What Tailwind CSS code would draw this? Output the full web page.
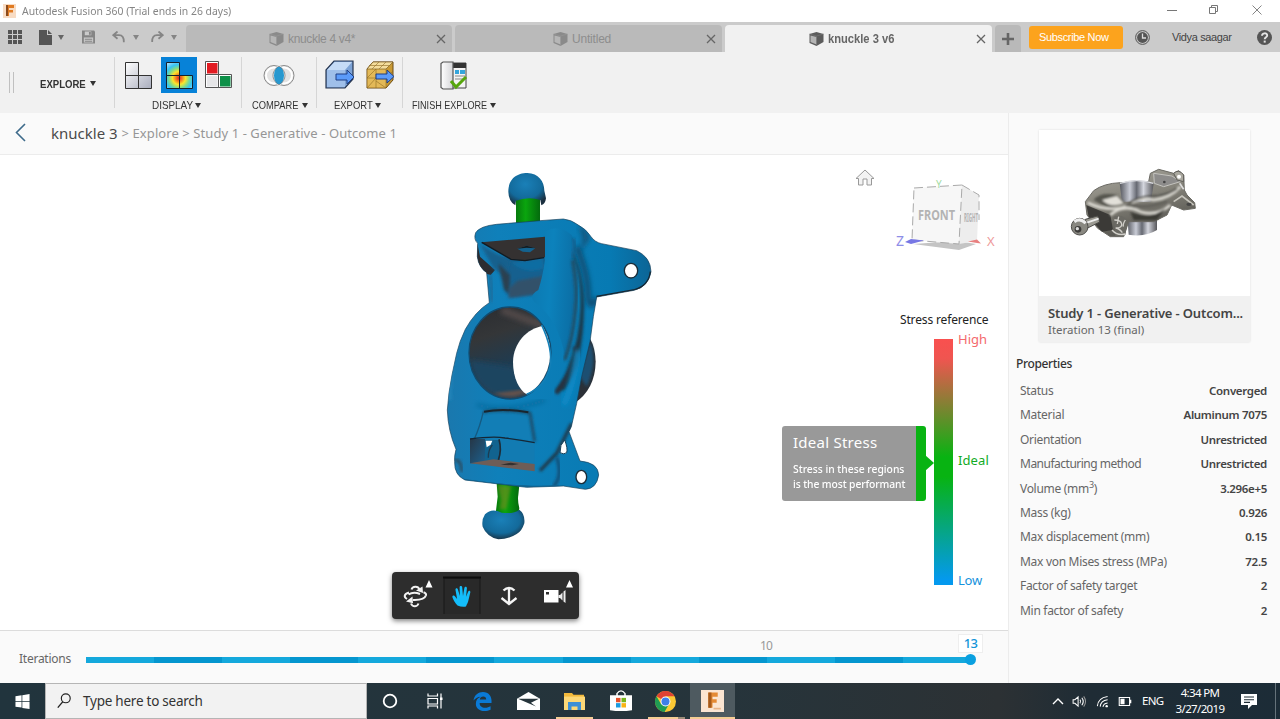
<!DOCTYPE html>
<html lang="en">
<head>
<meta charset="utf-8">
<title>Autodesk Fusion 360</title>
<script src="https://cdn.jsdelivr.net/npm/@tailwindcss/browser@4"></script>
</head>
<body class="w-[1280px] h-[719px] overflow-hidden flex flex-col bg-white font-['Noto_Sans','Open_Sans',sans-serif] whitespace-nowrap">
<svg class="hidden">
  <defs>
    <symbol id="cube" viewBox="0 0 16 16"><path d="M1 3 8 1l7 2v8l-7 4-7-3z" fill="#5c5c5c"/><path d="M2 4.500l6 1.500v7.500l-6-2.500z" fill="#b4b4b4"/><path d="M1 3 8 5l7-2M8 5v10" stroke="#777" stroke-width=".6" fill="none"/></symbol>
    <symbol id="x" viewBox="0 0 10 10"><path d="M1 1l8 8M9 1l-8 8" stroke="#666" stroke-width="1.300"/></symbol>
    <symbol id="tri" viewBox="0 0 6 5"><path d="M0 0h6L3 5z" fill="currentColor"/></symbol>
  </defs>
</svg>

<!-- Title bar -->
<header class="h-[22px] shrink-0 flex items-center bg-white pl-[3px] pr-[18px]">
  <svg class="w-[13px] h-[14px]" viewBox="0 0 13 14"><rect width="13" height="14" fill="#f8dcc4"/><path d="M3 1h8v3H6v2h4v2.500H6V12H3z" fill="#e07b22"/><path d="M3 1h2v11H3z" fill="#8a4a1c"/></svg>
  <span class="ml-[6px] text-[11.5px] origin-left scale-x-[0.905] text-[#858585]">Autodesk Fusion 360 (Trial ends in 26 days)</span>
  <div class="ml-auto -mt-[3px] flex items-center">
    <svg class="w-[10px] h-[10px]" viewBox="0 0 10 10"><path d="M0 5.500h10" stroke="#777"/></svg>
    <svg class="ml-[31px] w-[11px] h-[11px]" viewBox="0 0 11 11" fill="none" stroke="#777"><path d="M1.500 3.500h6v6h-6zM3.500 3V1.500h6v6H8"/></svg>
    <svg class="ml-[33px] w-[10px] h-[10px]" viewBox="0 0 10 10"><path d="M.5.5l9 9M9.500.5l-9 9" stroke="#777" stroke-width=".9"/></svg>
  </div>
</header>

<!-- Tab strip -->
<nav class="h-[30px] shrink-0 flex items-end bg-[#cbcbcb] font-['Liberation_Sans',sans-serif] text-[12px]">
  <div class="w-[186px] h-[30px] flex items-center pl-[8px] text-[#666]">
    <svg class="w-[14px] h-[14px]" viewBox="0 0 14 14" fill="#555"><path d="M0 0h4v4H0zM5 0h4v4H5zM10 0h4v4h-4zM0 5h4v4H0zM5 5h4v4H5zM10 5h4v4h-4zM0 10h4v4H0zM5 10h4v4H5zM10 10h4v4h-4z"/></svg>
    <svg class="ml-[17px] w-[13px] h-[15px]" viewBox="0 0 13 15" fill="#555"><path d="M0 0h8v5h5v10H0z"/><path d="M9 0l4 4H9z"/></svg>
    <svg class="ml-[6px] w-[6px] h-[5px]"><use href="#tri"/></svg>
    <svg class="ml-[18px] w-[13px] h-[14px]" viewBox="0 0 14 14"><path d="M0 0h13l1 1v13H0z" fill="#858585"/><path d="M3 1h7v4H3zM2 7.500h10V13H2z" fill="#cbcbcb"/><path d="M7.500 1.500h2v3h-2zM3 9h8v1H3zM3 11h8v1H3z" fill="#858585"/></svg>
    <svg class="ml-[17px] w-[13px] h-[12px]" viewBox="0 0 13 12" fill="none" stroke="#858585" stroke-width="1.800"><path d="M5.500.5 1.200 4.200l4.300 3.600M1.500 4.200H7c3.500 0 5 2.500 4.800 7"/></svg>
    <svg class="ml-[8px] w-[6px] h-[5px] text-[#858585]"><use href="#tri"/></svg>
    <svg class="ml-[12px] w-[13px] h-[12px]" viewBox="0 0 13 12" fill="none" stroke="#858585" stroke-width="1.800"><path d="M7.500.5l4.300 3.700-4.300 3.600M11.500 4.200H6C2.500 4.200 1 6.700 1.200 11"/></svg>
    <svg class="ml-[7px] w-[6px] h-[5px] text-[#858585]"><use href="#tri"/></svg>
  </div>
  <div class="w-[266px] h-[27px] rounded-t bg-[#bababa] flex items-center text-[#8d8d8d] pr-[6px]">
    <svg class="ml-[82px] w-[17px] h-[16px] opacity-50"><use href="#cube"/></svg>
    <span class="ml-[3px] tracking-[-0.33px]">knuckle 4 v4*</span>
    <svg class="ml-auto w-[10px] h-[10px]"><use href="#x"/></svg>
  </div>
  <div class="ml-[3px] w-[267px] h-[27px] rounded-t bg-[#bababa] flex items-center text-[#8d8d8d] pr-[6px]">
    <svg class="ml-[97px] w-[17px] h-[16px] opacity-50"><use href="#cube"/></svg>
    <span class="ml-[3px] tracking-[-0.2px]">Untitled</span>
    <svg class="ml-auto w-[10px] h-[10px]"><use href="#x"/></svg>
  </div>
  <div class="ml-[3px] w-[267px] h-[27px] rounded-t bg-[#f1f1f1] flex items-center text-[#666] font-bold pr-[6px]">
    <svg class="ml-[83px] w-[17px] h-[16px]"><use href="#cube"/></svg>
    <span class="ml-[3px] origin-left scale-x-[0.93]">knuckle 3 v6</span>
    <svg class="ml-auto w-[10px] h-[10px]"><use href="#x"/></svg>
  </div>
  <div class="ml-[3px] w-[26px] h-[27px] rounded-t bg-[#b9b9b9] flex items-center justify-center">
    <svg class="w-[12px] h-[12px]" viewBox="0 0 12 12"><path d="M6 0v12M0 6h12" stroke="#666" stroke-width="2.600"/></svg>
  </div>
  <div class="flex-1 h-[30px] flex items-center pl-[8px] pr-[8px]">
    <div class="w-[94px] h-[23px] rounded-[3px] bg-[#fca31d] text-white text-[11px] flex items-center pl-[10px] tracking-[-0.34px]">Subscribe Now</div>
    <svg class="ml-[12px] w-[15px] h-[15px]" viewBox="0 0 15 15"><circle cx="7.500" cy="7.500" r="6.900" fill="none" stroke="#555"/><circle cx="7.500" cy="7.500" r="5.400" fill="#555"/><path d="M7.500 3.500v4.500h3.500" stroke="#ddd" stroke-width="1.300" fill="none"/></svg>
    <span class="ml-[22px] text-[11px] text-[#444] tracking-[-0.37px]">Vidya saagar</span>
    <svg class="ml-auto w-[15px] h-[15px]" viewBox="0 0 15 15"><circle cx="7.500" cy="7.500" r="7.500" fill="#555"/><path d="M5 5.800c0-3.300 5.200-3.200 5.200-.3 0 1.900-2.500 1.700-2.500 3.800" stroke="#e4e4e4" stroke-width="1.900" fill="none"/><path d="M6.700 10.600h2v2h-2z" fill="#e4e4e4"/></svg>
  </div>
</nav>

<!-- Ribbon -->
<section class="h-[61px] shrink-0 flex bg-[#f1f1f1] font-['Liberation_Sans',sans-serif] text-[11px] text-[#333]">
  <div class="w-[114px] flex items-center pl-[9px]">
    <div class="w-[5px] h-[21px] border-x border-[#c0c0c0]"></div>
    <span class="ml-[26px] mt-[4px] w-[46px] font-bold text-[11px] origin-left scale-x-[0.87]">EXPLORE</span>
    <svg class="ml-[4px] mt-[2px] w-[6px] h-[5px]"><use href="#tri"/></svg>
  </div>
  <div class="w-[128px] my-[5px] border-x border-[#d6d6d6] flex flex-col">
    <div class="h-[36px] shrink-0 flex items-start pl-[10px]">
      <svg class="mt-[5px] w-[27px] h-[27px]" viewBox="0 0 27 27"><defs><linearGradient id="gr" x2="1" y2="1"><stop stop-color="#fff"/><stop offset="1" stop-color="#a9adbd"/></linearGradient></defs><g fill="url(#gr)" stroke="#333"><path d="M.5.5h13v13H.5zM.5 13.500h13v13H.5zM13.500 13.500h13v13h-13z"/></g></svg>
      <div class="ml-[9px] w-[36px] h-[36px] bg-[#0782d8] flex items-center justify-center">
        <svg class="w-[27px] h-[27px]" viewBox="0 0 27 27"><defs><radialGradient id="ht" gradientUnits="userSpaceOnUse" cx="13" cy="16" r="18"><stop stop-color="#d8202c"/><stop offset=".17" stop-color="#f47a20"/><stop offset=".36" stop-color="#fbe52b"/><stop offset=".56" stop-color="#7edb8b"/><stop offset=".75" stop-color="#36c5f4"/><stop offset="1" stop-color="#9bdcff"/></radialGradient></defs><g fill="url(#ht)" stroke="#17202a"><path d="M.5.5h13v13H.5zM.5 13.500h13v13H.5zM13.500 13.500h13v13h-13z"/></g></svg>
      </div>
      <svg class="ml-[8px] mt-[4px] w-[27px] h-[27px]" viewBox="0 0 27 27"><path d="M.5.5h13v13H.5zM.5 13.500h13v13H.5zM13.500 13.500h13v13h-13z" fill="#fff" stroke="#555"/><path d="M2 2h10.500v10.500H2z" fill="#e21b22"/><path d="M15 15h10.500v10.500H15z" fill="#0d9048"/><path d="M2 15h10.500v10.500H2z" fill="#e6e6e8"/></svg>
    </div>
    <div class="flex items-center pl-[37px] pt-[5px]"><span class="w-[41px] leading-[14px] origin-left scale-x-[0.9]">DISPLAY</span><svg class="ml-[2px] w-[6px] h-[5px]"><use href="#tri"/></svg></div>
  </div>
  <div class="w-[74px] my-[5px] flex flex-col">
    <div class="h-[36px] shrink-0 flex pl-[21px]">
      <svg class="mt-[7px] w-[32px] h-[24px]" viewBox="0 0 32 24"><rect x="1" y="1.500" width="20" height="20" rx="10" fill="#e3e3e3" stroke="#8a8a8a"/><rect x="11" y="1.500" width="20" height="20" rx="10" fill="#e3e3e3" stroke="#8a8a8a"/><rect x="3" y="3.500" width="16" height="16" rx="8" fill="none" stroke="#fff" stroke-width="2"/><rect x="13" y="3.500" width="16" height="16" rx="8" fill="none" stroke="#fff" stroke-width="2"/><ellipse cx="16" cy="11.500" rx="5.500" ry="9.500" fill="#2798cf" stroke="#fff" stroke-width="1"/><path d="M16 2c-8 5-8 14 0 19 8-5 8-14 0-19z" fill="none" stroke="#777" stroke-width=".8"/></svg>
    </div>
    <div class="flex items-center pl-[10px] pt-[5px]"><span class="w-[46px] leading-[14px] origin-left scale-x-[0.85]">COMPARE</span><svg class="ml-[4px] w-[6px] h-[5px]"><use href="#tri"/></svg></div>
  </div>
  <div class="w-[87px] my-[5px] border-x border-[#d6d6d6] flex flex-col">
    <div class="h-[36px] shrink-0 flex pl-[8px]">
      <svg class="mt-[3px] w-[30px] h-[29px]" viewBox="0 0 30 29"><path d="M1 10 9 1h19v18l-8 9H1z" fill="#7da3d6" stroke="#26354f" stroke-width="1.200"/><path d="M2 10 9.500 2H27l-7 8z" fill="#c5dbf6"/><path d="M2 10h18v17H2z" fill="#9fbfe9"/><path d="M11 14h11V10l7 7-7 7v-4H11z" fill="#5b9bfa" stroke="#1f3f85"/></svg>
      <svg class="ml-[11px] mt-[4px] w-[29px] h-[28px]" viewBox="0 0 29 28"><path d="M1 8 7 1h20v18l-7 8H1z" fill="#c99a34" stroke="#6d4d14" stroke-width="1"/><path d="M1.500 8H20v18.500H1.500z" fill="#e3b958"/><path d="M1 8 7 1h20l-7 7z" fill="#f4dd9c" stroke="#6d4d14" stroke-width=".6"/><path d="M1 17h9M10 8v19M10 17 1 27M10 20l10 7M20 8v19M6 8l7-7M13 8l7-7M20 17l7-7M3 4.500h20M1 17l9-9" stroke="#8f6b24" stroke-width=".6" fill="none"/><path d="M10 13h11V9l7 6.500-7 6.500v-4H10z" fill="#5b9bfa" stroke="#1f3f85"/></svg>
    </div>
    <div class="flex items-center pl-[17px] pt-[5px]"><span class="w-[38px] leading-[14px] origin-left scale-x-[0.86]">EXPORT</span><svg class="ml-[3px] w-[6px] h-[5px]"><use href="#tri"/></svg></div>
  </div>
  <div class="my-[5px] flex flex-col">
    <div class="h-[36px] shrink-0 flex pl-[37px]">
      <svg class="mt-[4px] w-[28px] h-[29px]" viewBox="0 0 28 29"><defs><linearGradient id="dr"><stop stop-color="#fff"/><stop offset="1" stop-color="#d5d5d8"/></linearGradient></defs><path d="M12 2h14v25H12z" fill="#f4f4f4" stroke="#444"/><path d="M13 2h13v5H13z" fill="#333"/><path d="M15 9h4v4h-4zM20 9h5v4h-5z" fill="#34a5dc"/><path d="M15 15h10M15 18h9" stroke="#888"/><path d="M1 2.500 3 1h10v27H3l-2-1.500z" fill="url(#dr)" stroke="#555" stroke-width="1.200"/><path d="M11 20l5 6 10-10" stroke="#57a60d" stroke-width="3" fill="none"/></svg>
    </div>
    <div class="flex items-center pl-[9px] pt-[5px]"><span class="w-[75px] leading-[14px] origin-left scale-x-[0.825]">FINISH EXPLORE</span><svg class="ml-[3px] w-[6px] h-[5px]"><use href="#tri"/></svg></div>
  </div>
</section>

<main class="h-[570px] shrink-0 flex">
  <div class="w-[1008px] flex flex-col">
    <!-- Breadcrumb -->
    <div class="h-[42px] shrink-0 bg-[#fafafa] border-b border-[#ececec] flex items-center pl-[15px] text-[#969696] text-[13px]">
      <svg class="w-[11px] h-[19px] -mt-[2px]" viewBox="0 0 11 19"><path d="M10 1 1.500 9.500 10 18" fill="none" stroke="#3d6a8a" stroke-width="1.600"/></svg>
      <span class="ml-[25px] text-[15px] text-[#4a4a4a]">knuckle 3</span>
      <span class="ml-[4px] tracking-[0.08px]">&gt; Explore &gt; Study 1 - Generative - Outcome 1</span>
    </div>

    <!-- 3D viewport -->
    <div class="relative h-[475px] shrink-0 bg-white overflow-hidden">
      <svg class="absolute left-[430px] top-[5px] w-[240px] h-[390px]" viewBox="0 0 720 1170">
        <defs>
          <linearGradient id="bl" x2="1"><stop stop-color="#1a78ae"/><stop offset=".25" stop-color="#0f80ba"/><stop offset=".8" stop-color="#077ab3"/><stop offset="1" stop-color="#0c6596"/></linearGradient>
          <radialGradient id="ball" cx=".45" cy=".35" r=".68"><stop stop-color="#1a80b8"/><stop offset=".65" stop-color="#136a9b"/><stop offset="1" stop-color="#1b2f3f"/></radialGradient>
          <linearGradient id="bore" x2="0.300" y2="1"><stop stop-color="#2a2c30"/><stop offset=".35" stop-color="#343638"/><stop offset=".7" stop-color="#1f3b50"/><stop offset="1" stop-color="#3f3b3c"/></linearGradient>
          <linearGradient id="gn" x2="1"><stop stop-color="#067a0c"/><stop offset=".4" stop-color="#0aa50e"/><stop offset="1" stop-color="#046a0d"/></linearGradient>
          <linearGradient id="dk" x2="1" y2="1"><stop stop-color="#263747"/><stop offset="1" stop-color="#1c5f8c"/></linearGradient>
          <linearGradient id="lobe" x2="1" y2=".2"><stop stop-color="#0c78b0"/><stop offset=".5" stop-color="#0c82bc"/><stop offset="1" stop-color="#0b70a7"/></linearGradient>
          <clipPath id="bc"><ellipse cx="240" cy="579" rx="121" ry="136"/></clipPath>
          <filter id="s3"><feGaussianBlur stdDeviation="4"/></filter>
          <filter id="s8"><feGaussianBlur stdDeviation="8"/></filter>
          <path id="sil" d="M137 218Q150 198 200 193L330 182 400 177Q425 180 440 192 470 208 483 230 495 247 515 251L620 272Q662 292 663 335 656 380 612 391L500 411 490 470 480 545 455 650 440 730 424 800 417 815 450 903Q505 908 506 945 500 986 466 988L400 978 290 982 105 960Q72 945 74 905 72 890 78 868 54 812 52 750 55 700 66 645L80 580Q88 545 106 508 135 455 178 428L170 338Q146 322 142 290L143 250Q130 238 137 218Z"/>
          <clipPath id="sc"><use href="#sil"/></clipPath>
        </defs>
        <path d="M440 510Q494 520 497 605 495 690 432 730z" fill="#2b3037"/>
        <path d="M480 545Q492 570 490 610 485 650 470 680L450 650z" fill="#1f4f72" filter="url(#s3)"/>
        <path d="M258 110h72v80h-72z" fill="url(#gn)"/>
        <path d="M235 95C235 55 262 39 292 39 325 39 343 65 343 92L348 115Q346 132 334 136L331 120Q295 108 258 122L256 136Q236 125 235 95z" fill="url(#ball)"/>
        <path d="M200 970L268 975 265 1005Q262 1020 268 1045L265 1060H197L203 1010z" fill="url(#gn)"/><path d="M203 975l40 3-14 70-20 0 4-28z" fill="#a08126" opacity=".45" filter="url(#s3)"/>
        <path d="M165 1063Q185 1043 215 1058 250 1063 268 1049 286 1062 283 1090 275 1115 260 1122 235 1138 205 1138 170 1130 158 1100 154 1080 165 1063z" fill="url(#ball)"/>
        <use href="#sil" fill="url(#bl)" stroke="#173e57" stroke-width="2"/>
        <g clip-path="url(#sc)">
          <path d="M142 250L150 290 195 330 182 345 130 330z" fill="#2c2c30"/>
          <path d="M195 290Q232 330 228 400L250 410 350 400 350 290z" fill="#14608f" filter="url(#s3)"/>
          <path d="M150 252L240 304 225 350 190 325z" fill="#12608d" filter="url(#s3)"/>
          <path d="M205 310L240 345 238 400 222 390z" fill="#2b3f50" filter="url(#s3)"/>
          <path d="M238 385L262 362 340 348 335 400 235 415z" fill="#33516a" filter="url(#s3)"/>
          <path d="M245 308Q290 345 342 325L338 295z" fill="#0e6da2" filter="url(#s3)"/>
          <path d="M180 345Q188 400 185 425" stroke="#1a6a98" stroke-width="8" fill="none" filter="url(#s3)"/>
          <path d="M442 200Q470 230 445 285L480 235 465 205z" fill="#14567e" filter="url(#s8)"/>
          <path d="M440 260Q474 340 474 400T504 414" stroke="#104c70" stroke-width="16" fill="none" filter="url(#s8)"/>
          <path d="M425 280Q454 340 452 440 448 540 418 610 404 660 378 692L405 690Q460 610 462 440 460 340 430 280z" fill="#1f3442" filter="url(#s3)"/>
          <path d="M345 215Q385 190 425 225 440 250 425 300 436 370 432 440 425 520 405 590 385 480 320 432 290 410 325 390 338 350 345 300z" fill="url(#lobe)"/>
          <path d="M428 300Q444 390 436 450 428 540 404 600" stroke="#2b3943" stroke-width="7" fill="none" filter="url(#s3)"/>
          <path d="M430 235Q442 255 425 295" stroke="#125b87" stroke-width="8" fill="none" filter="url(#s3)"/>
          <path d="M435 560Q445 600 410 655L378 700" stroke="#26333f" stroke-width="14" fill="none" filter="url(#s3)"/>
          <path d="M445 570Q430 680 400 735" stroke="#0b8bc8" stroke-width="18" fill="none" filter="url(#s8)"/>
          <path d="M425 790L380 880 330 932" stroke="#222f3a" stroke-width="9" fill="none" filter="url(#s3)"/>
          <path d="M380 890Q400 950 370 980" stroke="#124e76" stroke-width="10" fill="none" filter="url(#s3)"/>
          <path d="M140 735Q240 760 345 720" stroke="#10679a" stroke-width="10" fill="none" filter="url(#s8)"/>
          <path d="M500 412L615 392Q660 378 664 335" stroke="#18252f" stroke-width="10" fill="none"/>
          <path d="M75 900Q95 900 95 935" stroke="#2d4658" stroke-width="7" fill="none" filter="url(#s3)"/>
          <path d="M90 955Q280 984 380 975L400 982H90z" fill="#11618d"/>
          <path d="M105 480Q55 600 60 720" stroke="#2385ba" stroke-width="10" fill="none" filter="url(#s3)"/>
        </g>
        <path d="M155 247L345 230V292L285 302 243 298z" fill="#343131"/><path d="M155 247L243 298 285 302 342 293" stroke="#111b22" stroke-width="4" fill="none"/>
        <path d="M262 266L290 257 316 265 300 277 278 275z" fill="#14628e"/><path d="M262 266L290 257 316 265 290 263z" fill="#171a1c"/>
        <ellipse cx="603" cy="332" rx="20" ry="22" fill="#fff" stroke="#1b2d39" stroke-width="4"/>
        <ellipse cx="240" cy="579" rx="123" ry="138" fill="url(#bore)" stroke="#124b6f" stroke-width="4"/>
        <g clip-path="url(#bc)">
          <path d="M220 440L350 490 330 505 210 460z" fill="#51494a" filter="url(#s8)"/>
          <path d="M120 600Q140 710 240 715L290 700 250 620z" fill="#1d4561" filter="url(#s8)"/>
          <path d="M190 700Q250 722 295 693L270 690z" fill="#65514b" filter="url(#s3)"/>
          <path d="M340 498C290 505 250 550 249 605 249 655 268 690 290 703L365 680V500z" fill="#fff"/>
        </g>
        <path d="M335 495Q370 570 360 620 345 680 290 703" stroke="#1480b8" stroke-width="5" fill="none"/>
        <path d="M160 755Q190 740 300 757L314 780V845L270 835Q200 825 135 837z" fill="#127eb6"/>
        <path d="M160 757Q190 744 300 759L314 845" stroke="#1c4158" stroke-width="7" fill="none" filter="url(#s3)"/>
        <path d="M162 755Q220 744 295 757" stroke="#19252e" stroke-width="6" fill="none"/>
        <path d="M160 755Q150 800 133 837" stroke="#155a82" stroke-width="4" fill="none"/>
        <path d="M120 837L215 835 270 836 314 848V932L120 910z" fill="#127bb2"/>
        <path d="M120 837H165V910H120z" fill="url(#dk)"/>
        <path d="M165 840H210V905H165z" fill="#11638f"/><path d="M167 842h20l-5 12-12 8z" fill="#fff"/><path d="M207 838Q216 870 205 900" stroke="#1d2c38" stroke-width="5" fill="none"/><path d="M175 893Q174 870 187 855" stroke="#1d3c52" stroke-width="4" fill="none"/>
        <path d="M120 837Q190 828 225 834 270 840 314 848" stroke="#152736" stroke-width="4" fill="none"/>
        <path d="M120 910L190 898 314 912V934z" fill="#6e5d57"/><path d="M212 914l30-6 25 4-20 4z" fill="#33302f"/>
        <path d="M404 840Q414 865 410 878 402 885 390 878L393 856z" fill="#fff" stroke="#173e57" stroke-width="3"/>
        <ellipse cx="454" cy="951" rx="16" ry="20" fill="#fff" stroke="#1b2d39" stroke-width="4"/>
      </svg>

      <!-- View cube -->
      <svg class="absolute left-[840px] top-[5px] w-[168px] h-[110px]" viewBox="0 0 168 110">
        <path d="M16 18.500 25 10l9 8.500h-2.500V25h-4.500v-6h-4v6h-4.500v-6.500z" fill="#f3f3f3" stroke="#999"/>
        <path d="M73 84l44-3 19 3-17 6z" fill="#c4c4c4"/>
        <path d="M74 28l48-3-3 59-47-4z" fill="#f7f7f7"/><path d="M122 25l17 10-2 46-18 3z" fill="#ededed"/>
        <path d="M74 28l48-3-3 59-47-4zM122 25l17 10v25" fill="none" stroke="#aaa" stroke-dasharray="9 4"/>
        <text x="78" y="60" font-family="Noto Sans" font-weight="700" font-size="15" fill="#b3b3b3" textLength="37" lengthAdjust="spacingAndGlyphs">FRONT</text>
        <text x="124" y="62" font-family="Noto Sans" font-weight="700" font-size="13" fill="#b3b3b3" textLength="14" lengthAdjust="spacingAndGlyphs">RIGHT</text>
        <text x="96" y="28" font-family="Noto Sans" font-size="10" fill="#a3dba3">Y</text>
        <text x="56" y="86" font-family="Noto Sans" font-size="14" fill="#8e8ee8">Z</text>
        <text x="147" y="86" font-family="Noto Sans" font-size="13" fill="#ee9a9a">X</text>
        <path d="M65 82l6-3 13 1.500-13 3.500z" fill="#7777e4"/><path d="M128 81.500l9-2 4 4-4-.500z" fill="#e88080"/>
      </svg>

      <!-- Stress legend -->
      <span class="absolute left-[900px] top-[157px] text-[12px] leading-[16px] text-[#222] tracking-[-0.15px]">Stress reference</span>
      <div class="absolute left-[934px] top-[184px] w-[19px] h-[246px] bg-[linear-gradient(to_bottom,#f9504f_0%,#ef5550_8%,#08b312_48%,#08b312_56%,#0499ee_98%)]"></div>
      <div class="absolute left-[958px] top-[174px] h-[261px] flex flex-col justify-between text-[13px] leading-[20px]">
        <span class="text-[#f4696c]">High</span><span class="text-[#12ab25] tracking-[0.1px]">Ideal</span><span class="text-[#1592dc] tracking-[-0.2px]">Low</span>
      </div>
      <div class="absolute left-[782px] top-[271px] w-[144px] h-[75px] rounded-[3px] bg-[#999] border-r-[10px] border-[#08b312] text-white pl-[11px] pt-[5px]">
        <div class="text-[15px] leading-[22px] tracking-[0.25px]">Ideal Stress</div>
        <div class="mt-[8px] text-[11px] leading-[15px] font-medium origin-left scale-x-[0.938]">Stress in these regions<br><span class="tracking-[-0.1px]">is the most performant</span></div>
      </div>
      <svg class="absolute left-[925px] top-[300px] w-[9px] h-[16px]" viewBox="0 0 9 16"><path d="M0 0l9 8-9 8z" fill="#08b312"/></svg>

      <!-- Navigation toolbar -->
      <div class="absolute left-[392px] top-[417px] w-[187px] h-[47px] rounded-[4px] bg-[#2d2d2d] shadow-[0_2px_5px_rgba(0,0,0,0.5)] flex items-center">
        <svg class="w-[187px] h-[47px]" viewBox="0 0 187 47">
          <path d="M52 42V6h36v36" fill="#292929" stroke="#181818"/><path d="M51 5.500h38" stroke="#0c0c0c" stroke-width="2"/>
          <path d="M33.500 15.500l3.500-7.500 3.500 7.500zM174 15.500l3.500-7.500 3.500 7.500z" fill="#fff"/>
          <g fill="none" stroke="#f2f2f2" stroke-width="2"><path d="M17 20.500c-5 1.500-5.500 4.500-2 6.500M21 28c7 .3 12-1.700 13-4.700.3-1.300-.6-2.300-2.500-3M19.500 17.500c1-3.500 6.500-4 8 0M19 31.500c1.500 3.800 6 3.800 7.500 0M16.500 22.500c3-2 8-2 11.500-.5"/></g>
          <path d="M24 18.500l7 2.500-.5-6.500zM14 29.500l7 1.800-.5-6.800z" fill="#f2f2f2"/>
          <path d="M65.500 33.500C63 31 61.500 28 60.500 25.500c-.7-2 1.600-2.500 2.600-1.100l2 2.600L63.500 18c-.3-2 1.900-2.300 2.400-.5l2 6.500-.3-8.700c0-1.900 2.400-1.900 2.600 0l.8 8.700 1.400-8.200c.4-1.800 2.700-1.400 2.500.4l-.8 8.600 2-5c.7-1.700 2.600-1 2.200.7L76.500 28c-.6 3-1.600 4-2.500 6.500q-4 1-8.500-1z" fill="#14bdfa"/>
          <path d="M117 16v15M111.500 18.500q2.500-2.500 5.500-2.500t5.500 2.500M109.500 26l7.500 6 7.500-6" fill="none" stroke="#f4f4f4" stroke-width="2.300"/>
          <path d="M152 18h14.500v12.500H152z" fill="#fff"/><path d="M154 20h3v2.500h-3z" fill="#2d2d2d"/><path d="M166.500 23h1.500l2.500-2.500v8L168 26h-1.500zM171.500 19.500l2-1.500v13l-2-1.500z" fill="#eee"/>
        </svg>
      </div>
    </div>

    <!-- Iteration slider -->
    <div class="h-[53px] shrink-0 bg-[#fafafa] border-t border-[#dcdcdc] flex pl-[19px] text-[12px] text-[#666]">
      <span class="w-[67px] pt-[20px] leading-[16px] tracking-[-0.25px]">Iterations</span>
      <div class="relative w-[885px] h-[52px] pt-[26px]">
        <div class="h-[6px] grid grid-cols-13">
          <i class="bg-[#14a8dc]"></i><i class="bg-[#0596cf]"></i><i class="bg-[#14a8dc]"></i><i class="bg-[#0596cf]"></i><i class="bg-[#14a8dc]"></i><i class="bg-[#0596cf]"></i><i class="bg-[#14a8dc]"></i><i class="bg-[#0596cf]"></i><i class="bg-[#14a8dc]"></i><i class="bg-[#0596cf]"></i><i class="bg-[#14a8dc]"></i><i class="bg-[#0596cf]"></i><i class="bg-[#14a8dc]"></i>
        </div>
        <span class="absolute left-[674px] top-[7px] leading-[16px] text-[12px] text-[#999] tracking-[-0.8px]">10</span>
        <span class="absolute left-[872px] top-[3px] w-[25px] h-[19px] border border-[#eee] bg-white text-center leading-[17px] text-[13px] font-medium text-[#1494d8] tracking-[-0.6px]">13</span>
        <span class="absolute left-[879px] top-[23px] w-[11px] h-[11px] rounded-full bg-[#0aa0e0]"></span>
      </div>
    </div>
  </div>

  <!-- Properties panel -->
  <aside class="w-[272px] bg-[#fafafa] border-l border-[#ececec] text-[12px] text-[#666] pt-[17px]">
    <div class="ml-[30px] w-[211px] h-[212px] shadow-[0_0_2px_rgba(0,0,0,0.12)] bg-white flex flex-col">
      <svg class="w-[211px] h-[166px]" viewBox="86 30 633 498">
        <defs>
          <linearGradient id="cy"><stop stop-color="#55575e"/><stop offset=".3" stop-color="#c9ccd6"/><stop offset=".5" stop-color="#666972"/><stop offset=".7" stop-color="#d4d6de"/><stop offset="1" stop-color="#56565a"/></linearGradient>
          <linearGradient id="mt" x2=".4" y2="1"><stop stop-color="#a9a79e"/><stop offset=".5" stop-color="#85837a"/><stop offset="1" stop-color="#55544f"/></linearGradient>
          <filter id="t2"><feGaussianBlur stdDeviation="2.500"/></filter>
        </defs>
        <path d="M350 270h90v60q-35 22-85 14z" fill="url(#cy)"/>
        <path d="M225 245L250 212Q280 190 330 188L415 185 420 160 445 148 490 160 505 152 520 165 522 210 530 225 553 248 555 265 520 270 484 255 470 285 430 305 355 305 340 350 300 350 262 325 230 285z" fill="url(#mt)" stroke="#6b6a64" stroke-width="3"/>
        <path d="M328 190Q380 172 430 190L422 245H335z" fill="url(#cy)"/><path d="M329 190Q380 174 429 190" stroke="#dcdde2" stroke-width="4" fill="none"/>
        <path d="M228 255L300 285 308 330 275 335 235 290z" fill="#3b3a37"/>
        <g filter="url(#t2)">
          <path d="M250 240Q270 215 320 225L345 248 295 265z" fill="#55544e"/><path d="M275 240Q300 265 340 250L320 228z" fill="#e2e0d9"/>
          <path d="M232 248Q290 275 340 262 380 230 430 240 480 235 510 200M300 285Q340 250 390 275 440 290 480 255" fill="none" stroke="#dddbd4" stroke-width="8"/>
          <path d="M345 258Q385 225 440 228 485 220 500 205" fill="none" stroke="#504f4a" stroke-width="5"/>
          <path d="M350 252Q400 270 470 245" fill="none" stroke="#64625b" stroke-width="9"/>
          <path d="M360 275Q420 302 465 264L440 300H370z" fill="#3b3a36"/>
        </g>
        <path d="M430 160L485 168 510 185 460 200 432 190z" fill="#8d8c8b" stroke="#c4c3be" stroke-width="3"/><circle cx="462" cy="186" r="4" fill="#444"/>
        <path d="M310 290Q340 280 352 305L345 345 315 350z" fill="#6a6963"/><path d="M312 300q20 0 22 12t-18 12q12 2 20 14M325 290l-4 22M345 300q-8 12-6 20M305 330q15 18 40 12" stroke="#d2d0ca" stroke-width="4" fill="none"/>
        <path d="M225 298L262 288 268 306 230 325z" fill="#9b9a92" stroke="#4c4b48" stroke-width="3"/><path d="M230 308l35-12" stroke="#eee" stroke-width="6"/>
        <circle cx="208" cy="320" r="25" fill="#898881" stroke="#4e4d4a" stroke-width="3"/><path d="M192 305Q210 292 226 310" stroke="#eee" stroke-width="9" fill="none"/><circle cx="203" cy="328" r="10" fill="#3d3c3a"/><circle cx="201" cy="326" r="5" fill="#ddd"/>
        <path d="M490 160q15-15 30 5v20l-20-5z" fill="#aaa89f" stroke="#5e5d58" stroke-width="3"/><circle cx="506" cy="170" r="6" fill="#fff"/><path d="M508 190l12 18" stroke="#ddd" stroke-width="5"/>
        <path d="M490 245L515 228 550 255" stroke="#c6c4bc" stroke-width="5" fill="none"/><ellipse cx="536" cy="253" rx="8" ry="5" fill="#444"/>
      </svg>
      <div class="flex-1 bg-[#f1f1f1] pl-[9px] pt-[9px]">
        <div class="text-[13px] leading-[17px] font-semibold text-[#444] tracking-[-0.15px]">Study 1 - Generative - Outcom...</div>
        <div class="text-[11.500px] leading-[15px]">Iteration 13 (final)</div>
      </div>
    </div>
    <div class="ml-[7px] mt-[13px] leading-[18px] font-medium text-[#333] tracking-[-0.35px]">Properties</div>
    <dl class="mt-[6px] ml-[11px] mr-[13px] leading-[24.400px] [&>div]:flex [&>div]:justify-between [&_dt]:tracking-[-0.3px] [&_dd]:font-semibold [&_dd]:text-[11.500px] [&_dd]:text-[#444] [&_dd]:tracking-[-0.32px]">
      <div><dt>Status</dt><dd>Converged</dd></div>
      <div><dt>Material</dt><dd>Aluminum 7075</dd></div>
      <div><dt>Orientation</dt><dd>Unrestricted</dd></div>
      <div><dt><span class="tracking-[-0.5px]">Manufacturing method</span></dt><dd>Unrestricted</dd></div>
      <div><dt>Volume (mm<sup class="text-[9px] leading-none">3</sup>)</dt><dd>3.296e+5</dd></div>
      <div><dt>Mass (kg)</dt><dd>0.926</dd></div>
      <div><dt>Max displacement (mm)</dt><dd>0.15</dd></div>
      <div><dt>Max von Mises stress (MPa)</dt><dd>72.5</dd></div>
      <div><dt>Factor of safety target</dt><dd>2</dd></div>
      <div><dt>Min factor of safety</dt><dd>2</dd></div>
    </dl>
  </aside>
</main>

<!-- Windows taskbar -->
<footer class="h-[36px] shrink-0 flex bg-[linear-gradient(to_right,#21343d_0%,#26343b_57%,#2c3134_78%,#1f2c35_85%,#1c2c37_100%)] text-white text-[12px]">
  <div class="w-[45px] flex items-center justify-center"><svg class="w-[15px] h-[15px]" viewBox="0 0 15 16" fill="#fff"><path d="M0 2.300l6.500-1v6.200H0zM7.300 1.200 15 0v7.500H7.300zM0 8.300h6.500v6.200L0 13.600zM7.300 8.300H15V16l-7.700-1.200z"/></svg></div>
  <div class="w-[322px] bg-[#f2f2f2] border border-[#b5b5b5] flex items-center pl-[10px] text-[#333]">
    <svg class="w-[16px] h-[16px]" viewBox="0 0 16 18"><circle cx="10" cy="6" r="5" fill="none" stroke="#222" stroke-width="1.300"/><path d="M6.500 10 1 16.500" stroke="#222" stroke-width="1.500"/></svg>
    <span class="ml-[11px] text-[13.500px] tracking-[-0.24px]">Type here to search</span>
  </div>
  <div class="w-[46px] flex items-center justify-center"><svg class="w-[16px] h-[16px]" viewBox="0 0 16 16"><circle cx="8" cy="8" r="6.300" fill="none" stroke="#fff" stroke-width="1.800"/></svg></div>
  <div class="w-[43px] flex items-center justify-center"><svg class="w-[16px] h-[16px]" viewBox="0 0 16 16" fill="none" stroke="#fff" stroke-width="1.200"><path d="M1 .5v2.500h9.500V.5M1 5.500h9.500v5.500H1zM1 15.500V13h9.500v2.500M14 .5v15"/><path d="M13 4.500h2.500v2.500H13z" fill="#fff" stroke="none"/></svg></div>
  <div class="w-[53px] flex items-center justify-center"><svg class="w-[19px] h-[19px]" viewBox="0 0 19 20"><path d="M0 9C1 3 5 0 10 0c6 0 9 4.500 9 9v2.500H6.500C6.500 15 9 16.500 12 16.500c2.500 0 4.500-.7 6-1.600v3.700C16 19.600 14 20 11.500 20 6 20 2.500 16.500 2.500 12.500 2.500 9 4 6.500 7.500 5 4.500 5 1.500 7 0 9zM6.600 8h6.800c0-2-1-3.300-3.200-3.300C8.300 4.700 7 6 6.600 8z" fill="#0a7ad6" fill-rule="evenodd"/></svg></div>
  <div class="w-[40px] flex items-center justify-center"><svg class="-ml-[2px] w-[23px] h-[18px]" viewBox="0 0 23 20" preserveAspectRatio="none"><path d="M0 7.500 11.500 0 23 7.500V20H0z" fill="#fff"/><path d="M1 7.500h21L14 12l5 4z" fill="#26343b"/></svg></div>
  <div class="w-[51px] flex items-center justify-center relative"><svg class="w-[21px] h-[17px]" viewBox="0 0 21 19" preserveAspectRatio="none"><path d="M0 0h8l1.500 2H20v17H0z" fill="#f3b93b"/><path d="M0 4h21v15H0z" fill="#fdd877"/><path d="M4 10h13v9h-3.500v-4h-6v4H4z" fill="#3d8fd6"/></svg><i class="absolute bottom-0 left-[7px] w-[37px] h-[2px] bg-[#f5cd93]"></i></div>
  <div class="w-[41px] flex items-center justify-center"><svg class="w-[22px] h-[21px] -mt-[1px]" viewBox="0 0 22 24" preserveAspectRatio="none"><path d="M7 8V4q4-6 8 0v4" fill="none" stroke="#fff" stroke-width="1.500"/><path d="M0 6h22v17q-11 2-22 0z" fill="#fff"/><path d="M6 9h4.500v5H6z" fill="#e8512b"/><path d="M11.500 9H16v5h-4.500z" fill="#79b51c"/><path d="M6 15h4.500v5H6z" fill="#1c9ce0"/><path d="M11.500 15H16v5h-4.500z" fill="#f9b314"/></svg></div>
  <div class="w-[49px] flex items-center justify-center relative"><svg class="w-[21px] h-[21px]" viewBox="0 0 22 22"><circle cx="11" cy="11" r="11" fill="#fcc934"/><path d="M11 11 1.500 5.500A11 11 0 0 1 20.500 5.500H11z" fill="#df4233"/><path d="M1.500 5.500A11 11 0 0 0 10 22l5-9-8.500 1z" fill="#209c53"/><circle cx="11" cy="11" r="5.200" fill="#fff"/><circle cx="11" cy="11" r="4.200" fill="#3f7fe8"/></svg><i class="absolute bottom-0 left-[7px] w-[37px] h-[2px] bg-[#f5cd93] border-r-[7px] border-[#9b8c78]"></i></div>
  <div class="w-[45px] bg-[#4e5a60] flex items-center justify-center border-b-2 border-[#f5cd93]"><svg class="mt-[1px] w-[23px] h-[22px]" viewBox="0 0 22 26" preserveAspectRatio="none"><path d="M0 0h22v26H0z" fill="#fbe5d2"/><path d="M7 3h9v5h-5v3h4v4h-4v6H7z" fill="#e58a34"/><path d="M7 3h3v18H7z" fill="#a55a1c"/><path d="M12 21h7v2h-7z" fill="#e9b58a"/></svg></div>
  <div class="ml-auto flex items-center">
    <svg class="w-[12px] h-[8px]" viewBox="0 0 12 8"><path d="M1 7l5-5 5 5" fill="none" stroke="#fff" stroke-width="1.400"/></svg>
    <svg class="ml-[8px] w-[15px] h-[13px]" viewBox="0 0 15 14" fill="none" stroke="#fff" stroke-width="1.100"><path d="M.6 5v4h2L6 12V2L2.600 5zM8 5q1.500 2 0 4M10 3q3 4 0 8"/><path d="M12 1.500q4 5.500 0 11" stroke="#999"/></svg>
    <svg class="ml-[9px] w-[13px] h-[13px]" viewBox="0 0 13 14" fill="none" stroke="#fff" stroke-width="1.100"><path d="M1 12Q1.500 3 12 1.500M4 12.500Q4.500 6 12 5M7 12.800Q7.500 9 12 8.500"/><circle cx="11" cy="12" r="1.300" fill="#fff" stroke="none"/></svg>
    <svg class="ml-[9px] w-[14px] h-[9px]" viewBox="0 0 14 10"><path d="M.6.6h11.500v8.800H.6z" fill="none" stroke="#fff" stroke-width="1.200"/><path d="M2 2h4.500v6H2zM12.500 3H14v4h-1.500z" fill="#fff"/></svg>
    <span class="ml-[10px] w-[21px] text-[11.500px] tracking-[-0.7px]">ENG</span>
    <div class="ml-[10px] w-[54px] text-center text-[11.500px] leading-[16px] tracking-[-0.65px]">4:34 PM<br>3/27/2019</div>
    <svg class="ml-[14px] w-[16px] h-[15px]" viewBox="0 0 16 17" preserveAspectRatio="none"><path d="M0 0h16v12.500h-5L7 17v-4.500H0z" fill="#fff"/><path d="M3 3.500h10M3 6.500h10M3 9.500h6" stroke="#1f2c35" stroke-width="1.200"/></svg>
    <div class="ml-[18px] h-[36px] w-[5px] border-l border-[#65727a]"></div>
  </div>
</footer>
</body>
</html>
